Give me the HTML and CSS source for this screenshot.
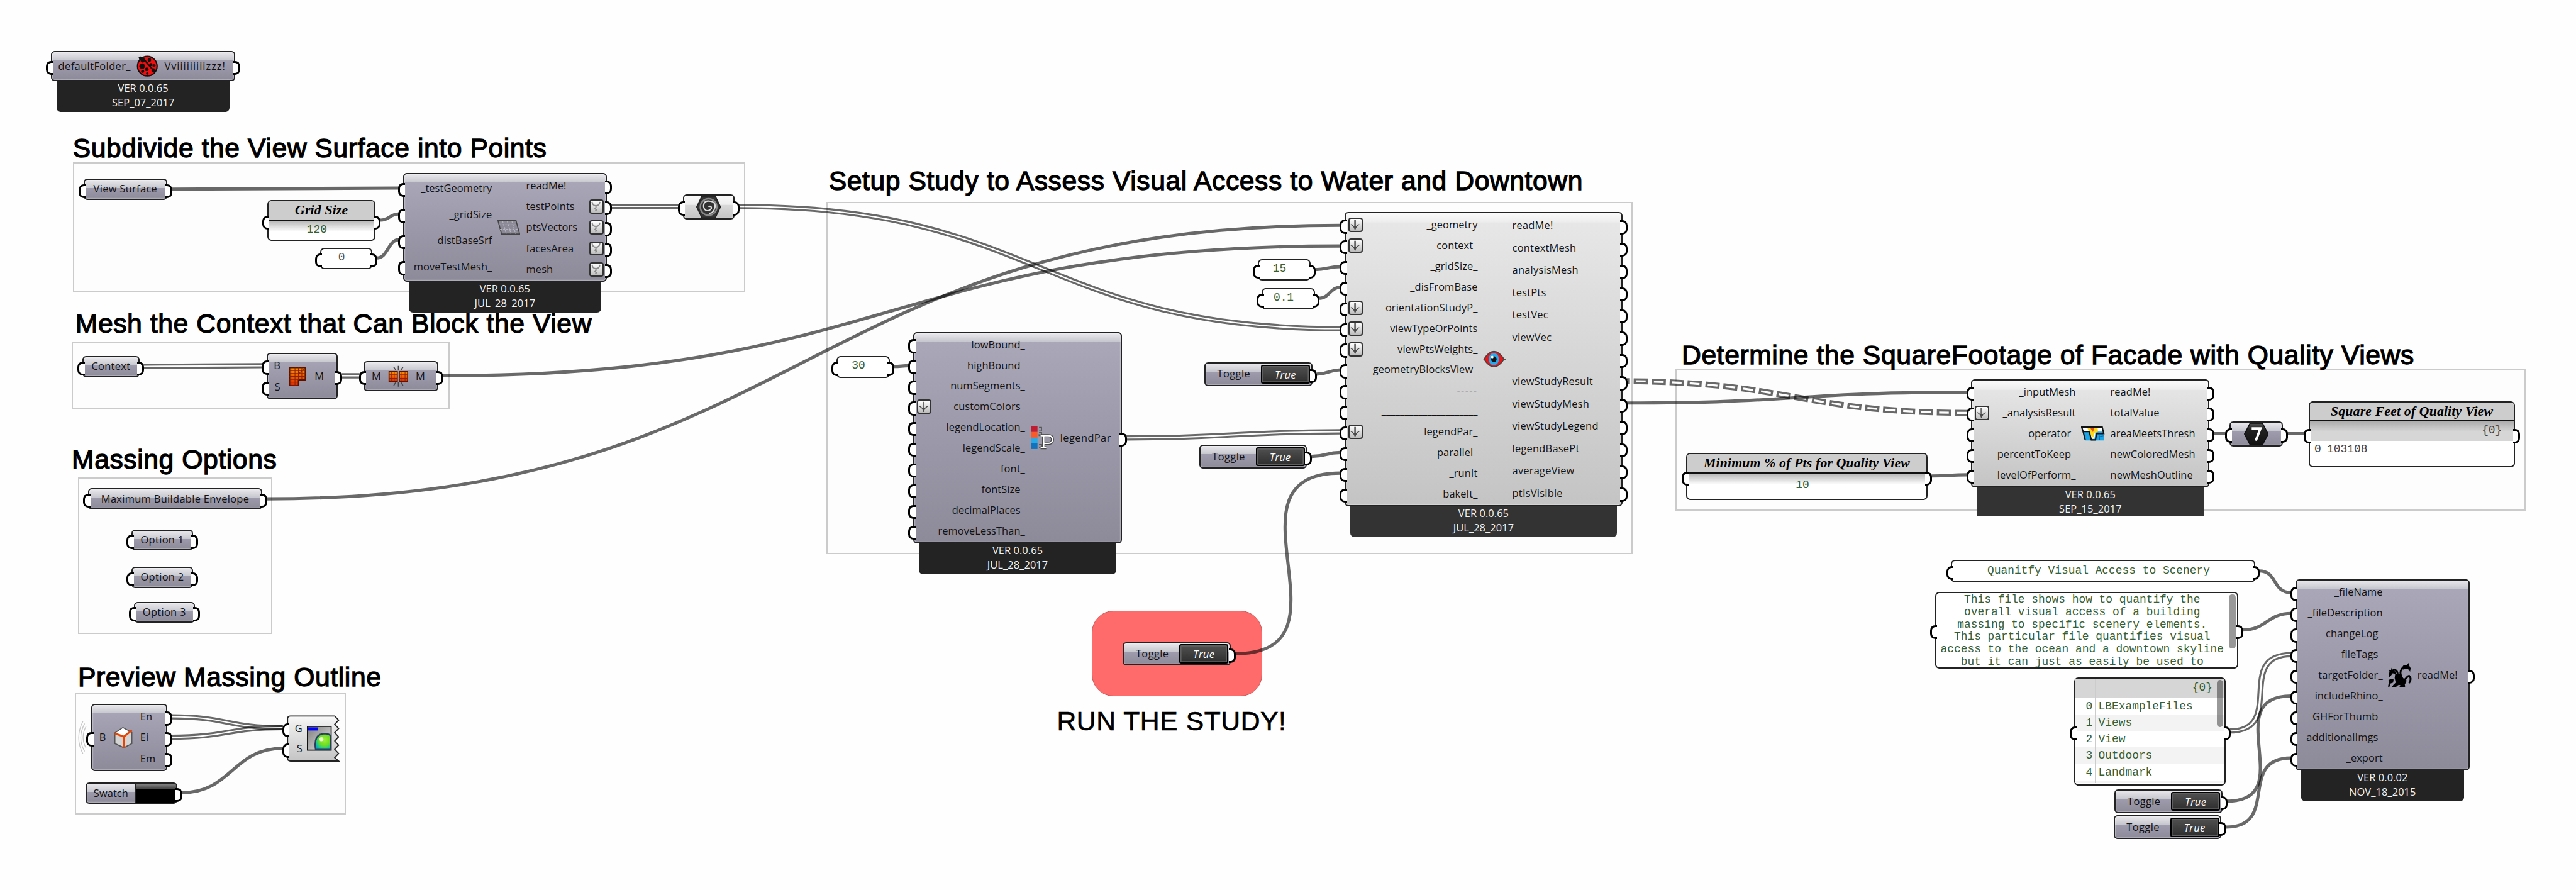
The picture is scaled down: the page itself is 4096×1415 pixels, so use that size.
FILE: index.html
```html
<!DOCTYPE html>
<html lang="en">
<head>
<meta charset="utf-8">
<title>View analysis definition</title>
<link rel="stylesheet" href="styles.css">
</head>
<body>
<svg class="defs" width="0" height="0" aria-hidden="true">
  <defs>
    <symbol id="arrow" viewBox="0 0 22 22"><path d="M11 1v14" stroke="#6a6a6a" stroke-width="3.600"/><path d="M2.500 10q6 2 8.500 11q2.500-9 8.500-11q-4 4-8.500 4t-8.500-4z" fill="#4a4a4a" stroke="#4a4a4a" stroke-width="1.500"/></symbol>
    <symbol id="graft" viewBox="0 0 22 22"><path d="M3 1q1 8 8 8t8-8M11 9v4l-2 2 3 2-2 3" fill="none" stroke="#8c8c8c" stroke-width="2.6"/></symbol>
    <linearGradient id="dark" x2="0" y2="1"><stop offset="0" stop-color="#555"/><stop offset=".3" stop-color="#222"/><stop offset="1" stop-color="#111"/></linearGradient>
    <linearGradient id="lava" x2="0" y2="1"><stop offset="0" stop-color="#ff9400"/><stop offset="1" stop-color="#e02800"/></linearGradient>
    <radialGradient id="ball" cx=".6" cy=".4" r=".7"><stop offset="0" stop-color="#9df03a"/><stop offset=".5" stop-color="#6fdd20"/><stop offset=".8" stop-color="#14c79a"/><stop offset="1" stop-color="#0aa0c0"/></radialGradient>
    <linearGradient id="silver" x2="1" y2="1"><stop offset="0" stop-color="#7d7d7d"/><stop offset="1" stop-color="#e8e8e8"/></linearGradient>
  </defs>
</svg>
<main class="canvas">
  <div class="group" id="g-subdivide"></div>
  <div class="group" id="g-mesh"></div>
  <div class="group" id="g-massing"></div>
  <div class="group" id="g-preview"></div>
  <div class="group" id="g-setup"></div>
  <div class="group" id="g-footage"></div>
  <div class="group run" id="g-run"></div>

  <svg class="wires" viewBox="0 0 4992 1724">
    <path d="M332 366.5C552 366.5 552 364.5 773 364.5"/>
    <path d="M737 426.5C755 426.5 755 414.7 773 414.7"/>
    <path d="M730 500C752 500 752 464.5 773 464.5"/>
    <path d="M858 728C1728 728 1728 476.7 2598 476.7"/>
    <path d="M516 966.6C1557 966.6 1557 436.7 2598 436.7"/>
    <path d="M352 1536C450 1536 450 1450 548 1450"/>
    <path d="M1732 710.3C1747 710.3 1747 708.6 1762 708.6"/>
    <path d="M2548 522.5C2573 522.5 2573 516.7 2598 516.7"/>
    <path d="M2556 578C2577 578 2577 556.7 2598 556.7"/>
    <path d="M2552 725C2575 725 2575 716.7 2598 716.7"/>
    <path d="M2542 884.4C2570 884.4 2570 876.7 2598 876.7"/>
    <path d="M2394 1266.7C2639 1266.7 2353 916.7 2598 916.7"/>
    <path d="M3743 922.3C3778 922.3 3778 920 3812 920"/>
    <path d="M4290 840.3H4313M4432 840.3H4466"/>
    <path d="M4378 1106.3C4414 1106.3 4403 1148.4 4440 1148.4"/>
    <path d="M4346 1220.7C4393 1220.7 4393 1188.5 4440 1188.5"/>
    <path d="M4316 1552.5C4459 1552.5 4297 1348.5 4440 1348.5"/>
    <path d="M4314 1602.7C4419 1602.7 4335 1468.7 4440 1468.7"/>
    <g class="pair">
      <path d="M1184 397H1315M1184 403H1315"/>
      <path d="M1432 397C2016 397 2016 633.7 2598 633.7"/><path d="M1432 403.3C2014 403.3 2014 640 2598 640"/>
      <path d="M278 706.8C393 706.8 393 705.4 509 705.4"/><path d="M278 713.2C393 713.2 393 711.8 509 711.8"/>
      <path d="M662 725H697M662 731.4H697"/>
      <path d="M332 1385.7C440 1385.7 440 1407 548 1407"/><path d="M332 1391.9C440 1391.9 440 1413.2 548 1413.2"/>
      <path d="M332 1425.3C440 1425.3 440 1407 548 1407"/><path d="M332 1431.5C440 1431.5 440 1413.2 548 1413.2"/>
      <path d="M2182 845.3C2390 845.3 2390 833.5 2598 833.5"/><path d="M2182 851.7C2390 851.7 2390 839.9 2598 839.9"/>
      <path d="M4321 1413.3C4427 1413.3 4324 1265.4 4440 1265.4"/><path d="M4321 1419.5C4436 1419.5 4334 1271.6 4440 1271.6"/>
    </g>
    <path class="chain" d="M3131 738.5C3479 738.5 3479 800 3820 800"/>
    <path class="chain hollow" d="M3131 738.5C3479 738.5 3479 800 3820 800"/>
    <path d="M3152 781C3482 781 3482 760 3812 760"/>
    <g class="waves"><path d="M167 1407q-12 22 0 43"/><path d="M164 1402q-15 28 0 54"/><path d="M161 1397q-17 33 0 64"/></g>
  </svg>

  <h2 id="t-subdivide">Subdivide the View Surface into Points</h2>
  <h2 id="t-mesh">Mesh the Context that Can Block the View</h2>
  <h2 id="t-massing">Massing Options</h2>
  <h2 id="t-preview">Preview Massing Outline</h2>
  <h2 id="t-setup">Setup Study to Assess Visual Access to Water and Downtown</h2>
  <h2 id="t-footage">Determine the SquareFootage of Facade with Quality Views</h2>
  <h2 class="plain" id="t-run">RUN THE STUDY!</h2>

  <article class="node" id="ladybug">
    <div class="body">
      <ul class="ins"><li>defaultFolder_</li></ul>
      <svg class="icon" viewBox="0 0 42 42"><path d="M6 11L4 3l4-1 6 4 6-3z" fill="#111"/><circle cx="21" cy="21" r="19" fill="#f50d0d" stroke="#111" stroke-width="2.5"/><path d="M13 6L36 33" stroke="#111" stroke-width="3"/><g fill="#111"><circle cx="11" cy="21" r="5.4"/><circle cx="12" cy="10" r="4"/><circle cx="25" cy="9" r="3.4"/><circle cx="28" cy="18" r="3"/><circle cx="34" cy="20" r="3"/><circle cx="20" cy="27" r="3.5"/><circle cx="12" cy="31" r="3"/><circle cx="21" cy="35" r="2.4"/><circle cx="33" cy="29" r="4"/></g></svg>
      <ul class="outs"><li>Vviiiiiiiiizzz!</li></ul>
    </div>
    <footer>VER 0.0.65<br>SEP_07_2017</footer>
  </article>

  <div class="param grips" id="view-surface">View Surface</div>
  <div class="panel grips" id="grid-size"><h3>Grid Size</h3><p>120</p></div>
  <div class="panel grips small" id="p-zero"><p>0</p></div>

  <article class="node" id="testgeo">
    <div class="body">
      <ul class="ins"><li>_testGeometry</li><li>_gridSize</li><li>_distBaseSrf</li><li>moveTestMesh_</li></ul>
      <svg class="icon" viewBox="0 0 44 28"><path d="M1 1h35l7 26H8z" fill="#8b8a96" stroke="#444" stroke-width="2"/><path d="M3 9h35M5 18h36M10 2l7 24M19 2l7 24M28 2l7 24" stroke="#b5b4c0" stroke-width="1.6" stroke-dasharray="4 2"/></svg>
      <ul class="outs"><li>readMe!</li><li>testPoints<i class="btn"><svg><use href="#graft"/></svg></i></li><li>ptsVectors<i class="btn"><svg><use href="#graft"/></svg></i></li><li>facesArea<i class="btn"><svg><use href="#graft"/></svg></i></li><li>mesh<i class="btn"><svg><use href="#graft"/></svg></i></li></ul>
    </div>
    <footer>VER 0.0.65<br>JUL_28_2017</footer>
  </article>

  <div class="param grips light" id="relay"><svg viewBox="0 0 48 44"><path d="M11 1h26l10 21-10 21H11L1 22z" fill="#333" stroke="#222" stroke-width="2"/><circle cx="24" cy="22" r="16" fill="none" stroke="#888" stroke-width="3"/><path d="M24 22q3-3 5 0t-3 6-9-1-2-11 13-5 8 13-11 10" fill="none" stroke="#ddd" stroke-width="2.6"/></svg></div>

  <div class="param grips" id="context">Context</div>
  <article class="node" id="brep-mesh">
    <div class="body">
      <ul class="ins"><li>B</li><li>S</li></ul>
      <svg class="icon" viewBox="0 0 36 40"><path d="M2 2h32v25H20v12H2z" fill="url(#lava)" stroke="#5a1200" stroke-width="2.5"/><path d="M20 2v25M7 2v36M13 2v36M27 2v24M2 8h32M2 14h32M2 20h32M2 26h18M2 32h18M21 14l12-11" stroke="#8a2200" stroke-width="1.4"/></svg>
      <ul class="outs"><li>M</li></ul>
    </div>
  </article>
  <article class="node" id="mesh-join">
    <div class="body">
      <ul class="ins"><li>M</li></ul>
      <svg class="icon" viewBox="0 0 40 42"><g fill="url(#lava)" stroke="#5a1200" stroke-width="2"><path d="M2 12h16v19H2zM22 12h16v19H22z"/></g><path d="M7 12v19M12 12v19M2 18h16M2 25h16M27 12v19M33 12v19M22 18h16M22 25h16" stroke="#8a2200" stroke-width="1.2"/><path d="M20 1v8M11 3l4 6M29 3l-4 6M20 33v8M11 39l4-6M29 39l-4-6" stroke="#444" stroke-width="2"/></svg>
      <ul class="outs"><li>M</li></ul>
    </div>
  </article>

  <div class="param grips" id="envelope">Maximum Buildable Envelope</div>
  <div class="param grips" id="option1">Option 1</div>
  <div class="param grips" id="option2">Option 2</div>
  <div class="param grips" id="option3">Option 3</div>

  <article class="node" id="edges">
    <div class="body">
      <ul class="ins"><li>B</li></ul>
      <svg class="icon" viewBox="0 0 36 40"><path d="M17 1l17 9v21l-15 8L2 31V11z" fill="#d4d4d4" stroke="#555" stroke-width="2"/><path d="M17 2l15 8-13 7L4 11z" fill="#fff"/><path d="M2 12l17 6v21M19 18L34 6" fill="none" stroke="#e84300" stroke-width="3.6"/></svg>
      <ul class="outs"><li>En</li><li>Ei</li><li>Em</li></ul>
    </div>
  </article>
  <div class="swatch"><span>Swatch</span><b></b></div>
  <article class="jagged">
    <svg class="edge" viewBox="0 0 101 89"><defs><linearGradient id="lt" x2="0" y2="1"><stop offset="0" stop-color="#fafafa"/><stop offset=".18" stop-color="#ececec"/><stop offset="1" stop-color="#c4c4c4"/></linearGradient></defs><path d="M7 1.500H92l7.500 8-7.500 8 7.500 8-7.500 8 7.500 8-7.500 8 7.500 8-7.500 8 7.500 8-7.500 8 7.500 6.500H7q-5.500 0-5.500-5.500V7q0-5.500 5.500-5.500z" fill="url(#lt)" stroke="#222" stroke-width="2.2"/></svg>
    <ul class="ins"><li>G</li><li>S</li></ul>
    <svg class="scene" viewBox="0 0 48 48"><path d="M1 1h46v46H1z" fill="url(#silver)" stroke="#111" stroke-width="2"/><path d="M2 3h19v6H2z" fill="#00f"/><path d="M17 46Q12 16 34 15q8 0 12 4v27z" fill="url(#ball)" stroke="#2a3f5c" stroke-width="3"/><circle cx="28" cy="26" r="4" fill="#fff" opacity=".8"/></svg>
  </article>

  <div class="panel grips small" id="p-thirty"><p>30</p></div>
  <article class="node" id="legend">
    <div class="body">
      <ul class="ins"><li>lowBound_</li><li>highBound_</li><li>numSegments_</li><li><i class="btn"><svg><use href="#arrow"/></svg></i>customColors_</li><li>legendLocation_</li><li>legendScale_</li><li>font_</li><li>fontSize_</li><li>decimalPlaces_</li><li>removeLessThan_</li></ul>
      <svg class="icon" viewBox="0 0 46 46"><path d="M1 1h12v11H1z" fill="#c01d33"/><path d="M1 12h12v11H1z" fill="#fa5a28"/><path d="M1 23h12v11H1z" fill="#29a9e5"/><path d="M1 34h12v11H1z" fill="#1172bd"/><path d="M16 3h5v7h-5M16 13h5v6h-5v-3M16 36h5v6h-5" fill="none" stroke="#555" stroke-width="1.600"/><path d="M25 42V19h9q8 0 8 7.500t-8 7.500h-8M19 19h7M19 42.500h11" fill="none" stroke="#444" stroke-width="6"/><path d="M25 42V19h9q8 0 8 7.500t-8 7.500h-8M19 19h7M19 42.500h11" fill="none" stroke="#fff" stroke-width="2.800"/></svg>
      <ul class="outs"><li>legendPar</li></ul>
    </div>
    <footer>VER 0.0.65<br>JUL_28_2017</footer>
  </article>

  <div class="panel grips small" id="p-fifteen"><p>15</p></div>
  <div class="panel grips small" id="p-tenth"><p>0.1</p></div>
  <div class="toggle" id="toggle1"><span>Toggle</span><b>True</b></div>
  <div class="toggle" id="toggle2"><span>Toggle</span><b>True</b></div>
  <div class="toggle" id="toggle3"><span>Toggle</span><b>True</b></div>

  <article class="node light" id="view-study">
    <div class="body">
      <ul class="ins"><li><i class="btn"><svg><use href="#arrow"/></svg></i>_geometry</li><li><i class="btn"><svg><use href="#arrow"/></svg></i>context_</li><li>_gridSize_</li><li>_disFromBase</li><li><i class="btn"><svg><use href="#arrow"/></svg></i>orientationStudyP_</li><li><i class="btn"><svg><use href="#arrow"/></svg></i>_viewTypeOrPoints</li><li><i class="btn"><svg><use href="#arrow"/></svg></i>viewPtsWeights_</li><li>geometryBlocksView_</li><li class="dashes">-----</li><li>_____________________</li><li><i class="btn"><svg><use href="#arrow"/></svg></i>legendPar_</li><li>parallel_</li><li>_runIt</li><li>bakeIt_</li></ul>
      <svg class="icon" viewBox="0 0 46 34"><path d="M1 17h44" stroke="#555" stroke-width="2.500"/><path d="M2 17Q21-13 41 17Q21 47 2 17z" fill="#f01414" stroke="#444" stroke-width="2"/><ellipse cx="21" cy="17" rx="10" ry="12" fill="#20aaf0"/><circle cx="21" cy="17" r="5.500" fill="#111"/><circle cx="18" cy="13" r="2.500" fill="#fff"/></svg>
      <ul class="outs"><li>readMe!</li><li>contextMesh</li><li>analysisMesh</li><li>testPts</li><li>testVec</li><li>viewVec</li><li>_____________________</li><li>viewStudyResult</li><li>viewStudyMesh</li><li>viewStudyLegend</li><li>legendBasePt</li><li>averageView</li><li>ptIsVisible</li></ul>
    </div>
    <footer>VER 0.0.65<br>JUL_28_2017</footer>
  </article>

  <div class="panel grips" id="min-pts"><h3>Minimum % of Pts for Quality View</h3><p>10</p></div>
  <article class="node light" id="area">
    <div class="body">
      <ul class="ins"><li>_inputMesh</li><li><i class="btn"><svg><use href="#arrow"/></svg></i>_analysisResult</li><li>_operator_</li><li>percentToKeep_</li><li>levelOfPerform_</li></ul>
      <svg class="icon" viewBox="0 0 46 28"><path d="M1 1h40l4 26H8z" fill="#1ba5e6"/><path d="M3 3h37l2 7H28l-2 14h-6L17 10H4z" fill="#fff"/><path d="M12 3h20l1 7-7 3-2 8h-3l-4-10z" fill="#ffd81a"/><path d="M18 3h8l-3 8z" fill="#e8501a"/><path d="M41 1H1l3 9h12l4 16h8l2-12h14L41 1zM8 26L4 10" fill="none" stroke="#111" stroke-width="2.600"/><path d="M34 20l10-2M36 26l-1-11" stroke="#0b6fb0" stroke-width="1.500"/></svg>
      <ul class="outs"><li>readMe!</li><li>totalValue</li><li>areaMeetsThresh</li><li>newColoredMesh</li><li>newMeshOutline</li></ul>
    </div>
    <footer>VER 0.0.65<br>SEP_15_2017</footer>
  </article>
  <div class="param grips" id="integer"><svg viewBox="0 0 48 44"><path d="M12 1h24l11 21-11 21H12L1 22z" fill="url(#dark)" stroke="#111" stroke-width="2"/><path d="M15 11h17l-9 24" fill="none" stroke="#fff" stroke-width="4.600"/></svg></div>
  <div class="panel grips list" id="sq-feet"><h3>Square Feet of Quality View</h3><div class="path"><span></span><span>{0}</span></div><div class="row"><span>0</span><span>103108</span></div></div>

  <div class="panel grips" id="file-name"><p>Quanitfy Visual Access to Scenery</p></div>
  <div class="panel grips" id="file-desc"><p>This file shows how to quantify the<br>overall visual access of a building<br>massing to specific scenery elements.<br>This particular file quantifies visual<br>access to the ocean and a downtown skyline<br>but it can just as easily be used to</p><i class="scroll"></i></div>
  <div class="panel grips list" id="tags"><div class="path"><span></span><span>{0}</span></div><div class="row"><span>0</span><span>LBExampleFiles</span></div><div class="row"><span>1</span><span>Views</span></div><div class="row"><span>2</span><span>View</span></div><div class="row"><span>3</span><span>Outdoors</span></div><div class="row"><span>4</span><span>Landmark</span></div><div class="row"><span></span><span></span></div><i class="scroll"></i></div>
  <div class="toggle" id="toggle4"><span>Toggle</span><b>True</b></div>
  <div class="toggle" id="toggle5"><span>Toggle</span><b>True</b></div>
  <article class="node" id="export">
    <div class="body">
      <ul class="ins"><li>_fileName</li><li>_fileDescription</li><li>changeLog_</li><li>fileTags_</li><li>targetFolder_</li><li>includeRhino_</li><li>GHForThumb_</li><li>additionalImgs_</li><li>_export</li></ul>
      <svg class="icon" viewBox="0 0 46 48"><g fill="#000"><path d="M14 22q8-3 12 2l4 6q8 0 5 8l-3 4 1 5H22l2-4-6-1-2 5H9l1-4 5-5-2-9z"/><path d="M1 26l2-9-1-4 4 1 1-5 2 6 8 2-2 4-6-1-5 7z"/><path d="M27 9l3-4 7-1 3-4 1 5 3 5-1 7-4-5-5-1-5 2z"/><path d="M0 46l2-9-1-4 5-2 5 1-1 6-5 2-2 6z"/></g><g fill="none" stroke="#000" stroke-width="3.600"><path d="M8 15q10-5 11 8M26 26q-4-8 1-15l6-5M32 34q5-8 9-9 6 5 0 14M20 41l-12 6M30 40l2 6"/></g></svg>
      <ul class="outs"><li>readMe!</li></ul>
    </div>
    <footer>VER 0.0.02<br>NOV_18_2015</footer>
  </article>
</main>
</body>
</html>
```

FILE: styles.css
```css
* { box-sizing: border-box; margin: 0; padding: 0; }
body { background: #fefefe; overflow: hidden; }
ul { list-style: none; }
.defs { position: absolute; }

.canvas {
  position: relative;
  width: 4992px;
  height: 1724px;
  overflow: hidden;
  zoom: 0.8205128;
  font: 20px/28px "Open Sans", "Noto Sans", sans-serif;
  letter-spacing: 0.1px;
  color: #111;
}
.canvas > * { position: absolute; white-space: nowrap; }

/* Group frames */
.group { border: 3px solid #cbcbcb; background: #fdfdfd; }
.group.run { border: 2px solid #c85a5a; border-radius: 42px; background: #ff6a6a; }
#g-subdivide { left: 141px; top: 315px; width: 1303px; height: 251px; }
#g-mesh { left: 139px; top: 663px; width: 732px; height: 131px; }
#g-massing { left: 151px; top: 925px; width: 377px; height: 303px; }
#g-preview { left: 145px; top: 1343px; width: 525px; height: 235px; }
#g-setup { left: 1601px; top: 391px; width: 1563px; height: 683px; }
#g-footage { left: 3247px; top: 715px; width: 1647px; height: 275px; }
#g-run { left: 2116px; top: 1184px; width: 330px; height: 165px; }

/* Wires */
.wires { left: 0; top: 0; width: 4992px; height: 1724px; }
.wires path { fill: none; stroke: #000; stroke-opacity: 0.59; stroke-width: 6.2; }
.wires .pair path { stroke-width: 3.8; }
.wires .chain { stroke-width: 11.5; stroke-dasharray: 27.500 7.3; }
.wires .hollow { stroke: #fdfdfd; stroke-opacity: 1; stroke-width: 4; stroke-dasharray: 19 15.8; stroke-dashoffset: -4.3; }
.wires .waves path { stroke-width: 1.6; stroke-opacity: 0.22; }

/* Headings */
h2 {
  font: 52px/60px "Liberation Sans", Arial, sans-serif;
  color: #000;
  -webkit-text-stroke: 1.6px #000;
  letter-spacing: 0.7px;
}
h2.plain { -webkit-text-stroke-width: 0.8px; }
#t-subdivide { left: 141px; top: 257px; }
#t-mesh { left: 146px; top: 597px; }
#t-massing { left: 139px; top: 861px; }
#t-preview { left: 151px; top: 1282px; }
#t-setup { left: 1606px; top: 320px; }
#t-footage { left: 3259px; top: 658px; }
#t-run { left: 2048px; top: 1367px; }

/* Shared capsule look */
.body, .param, .toggle, .swatch {
  border: 2.5px solid #222;
  border-radius: 7px;
  background:
    linear-gradient(#e8e8ec, #c6c6ce) top / 100% 16px no-repeat,
    linear-gradient(#aaa8b9, #8d8b9a);
  box-shadow: inset 0 0 0 1.5px rgba(255, 255, 255, 0.28);
}
.light .body, .param.light {
  background:
    linear-gradient(#fafafa, #ececec) top / 100% 18px no-repeat,
    linear-gradient(#e8e8e8, #c4c4c4);
}

/* Grips */
.ins li, .outs li { position: relative; }
.ins li::before, .outs li::after, .grips::before, .grips::after, .toggle::after, .swatch::after {
  content: "";
  position: absolute;
  top: calc(50% - 10px);
  width: 10px;
  height: 20px;
  border: 4px solid #000;
  background: #fff;
}
.ins li::before, .grips::before {
  left: -12px;
  border-right: 0;
  border-radius: 10px 0 0 10px;
}
.outs li::after, .grips::after, .toggle::after, .swatch::after {
  right: -12px;
  border-left: 0;
  border-radius: 0 10px 10px 0;
}

/* Components */
.body { display: grid; align-items: center; padding: 2px 0; }
.ins, .outs { display: flex; flex-direction: column; height: 100%; }
.ins li, .outs li { flex: 1; display: flex; align-items: center; padding-top: 1px; }
.ins li { justify-content: flex-end; }
.ins .dashes { letter-spacing: 1.6px; }
.icon { justify-self: center; }
.node footer {
  height: 60px;
  margin: 0 11px;
  border-radius: 0 0 8px 8px;
  background: #232323;
  color: #f4f4f4;
  text-align: center;
  line-height: 28px;
}
.light footer { background: #333; }
.btn {
  width: 28px;
  height: 28px;
  padding: 1px;
  border: 2.5px solid #333;
  border-radius: 5px;
  background: linear-gradient(#fff, #bdbdbd);
}
.btn svg { display: block; width: 21px; height: 21px; }
.ins .btn { margin: 0 auto 0 4px; }
.outs .btn { margin: 0 4px 0 auto; }

#ladybug { left: 99px; top: 99px; width: 357px; }
#ladybug .body { height: 58px; grid-template-columns: 152px 1fr 135px; }
#ladybug .ins { letter-spacing: 0.5px; }
#ladybug .outs { letter-spacing: 1.2px; }
#ladybug .icon { width: 42px; }
#testgeo { left: 781px; top: 335px; width: 395px; }
#testgeo .body { height: 211px; grid-template-columns: 170px 1fr 154px; }
#testgeo .icon { width: 44px; }
#brep-mesh { left: 517px; top: 684px; width: 137px; }
#brep-mesh .body { height: 90px; grid-template-columns: 24px 1fr 42px; }
#brep-mesh .icon { width: 34px; }
#mesh-join { left: 705px; top: 700px; width: 145px; }
#mesh-join .body { height: 58px; grid-template-columns: 31px 1fr 42px; }
#mesh-join .icon { width: 40px; }
#edges { left: 177px; top: 1364px; width: 147px; }
#edges .body { height: 130px; grid-template-columns: 26px 1fr 50px; }
#edges .icon { width: 37px; }
#legend { left: 1770px; top: 643px; width: 404px; }
#legend .body { height: 410px; grid-template-columns: 214px 1fr 117px; }
#legend .outs { letter-spacing: 0.5px; }
#legend .icon { width: 46px; }
#view-study { left: 2606px; top: 411px; width: 538px; }
#view-study .body { height: 570px; grid-template-columns: 255px 1fr 211px; }
#view-study .outs { letter-spacing: 0.3px; }
#view-study .icon { width: 46px; }
#area { left: 3820px; top: 735px; width: 462px; }
#area .body { height: 210px; grid-template-columns: 200px 1fr 190px; }
#area .icon { width: 46px; }
#area footer { height: 55px; border-radius: 0; }
#export { left: 4448px; top: 1123px; width: 338px; }
#export .body { height: 370px; grid-template-columns: 167px 1fr 99px; }
#export .icon { width: 46px; }

/* Single-parameter capsules */
.param { display: flex; align-items: center; justify-content: center; height: 41px; letter-spacing: 0.4px; }
.param svg { width: 48px; }
#view-surface { left: 162px; top: 346px; width: 162px; }
#relay { left: 1323px; top: 376px; width: 101px; height: 49px; }
#context { left: 160px; top: 690px; width: 110px; }
#envelope { left: 171px; top: 946px; width: 337px; }
#option1 { left: 255px; top: 1026px; width: 119px; }
#option2 { left: 255px; top: 1098px; width: 119px; }
#option3 { left: 259px; top: 1166px; width: 119px; }
#integer { left: 4321px; top: 816px; width: 103px; height: 49px; }

/* Toggles and the colour swatch */
.toggle { display: flex; width: 209px; height: 46px; padding: 2px; letter-spacing: 0.5px; }
.toggle span, .swatch span { flex: 1; display: flex; align-items: center; justify-content: center; }
.toggle b {
  width: 95px;
  border: 2.5px solid #000;
  border-radius: 4px;
  background: linear-gradient(#505050, #2e2e2e);
  box-shadow: inset 0 0 0 2px #606060;
  color: #fff;
  font-weight: 400;
  font-style: italic;
  line-height: 34px;
  text-align: center;
}
#toggle1 { left: 2334px; top: 702px; }
#toggle2 { left: 2324px; top: 862px; }
#toggle3 { left: 2176px; top: 1244px; }
#toggle4 { left: 4098px; top: 1530px; }
#toggle5 { left: 4096px; top: 1580px; }
.swatch { display: flex; left: 166px; top: 1516px; width: 178px; height: 42px; }
.swatch b {
  width: 80px;
  border-left: 2px solid #222;
  border-radius: 0 4px 4px 0;
  background: linear-gradient(#888, #444) top / 100% 10px no-repeat, #000;
}

/* Preview component with a torn right side */
.jagged { left: 556px; top: 1386px; width: 102px; height: 90px; display: flex; padding: 5px 0; align-items: center; }
.jagged .edge { position: absolute; left: 0; top: 0; width: 102px; height: 90px; }
.jagged .ins { width: 30px; margin-right: 9px; }
.jagged .ins li::before { left: -9px; }
.jagged .scene { position: relative; width: 48px; }

/* Text panels */
.panel {
  border: 2.5px solid #222;
  border-radius: 8px;
  background: #fff;
  font: 21.8px/24.1px "Liberation Mono", "Courier New", monospace;
  letter-spacing: 0;
  color: #356035;
}
.panel h3 {
  border-bottom: 3px solid #111;
  border-radius: 5px 5px 0 0;
  background: #cdcdcd;
  font: italic bold 26.500px/35px "Liberation Serif", "Times New Roman", serif;
  letter-spacing: 0.2px;
  color: #000;
  text-align: center;
}
.panel p { text-align: center; }
.small { height: 42px; line-height: 34px; }
.small p { padding-right: 18px; }
#grid-size { left: 518px; top: 388px; width: 210px; height: 79px; background: linear-gradient(#bbb, #fff) 0 38px / 100% 20px no-repeat, #fff; }
#grid-size p { padding: 6px 18px 0 0; }
#p-zero { left: 620px; top: 480px; width: 102px; color: #555; }
#p-thirty { left: 1621px; top: 690px; width: 103px; }
#p-fifteen { left: 2437px; top: 502px; width: 103px; }
#p-tenth { left: 2445px; top: 558px; width: 103px; }
#min-pts { left: 3268px; top: 878px; width: 467px; height: 91px; background: linear-gradient(#bbb, #fff) 0 38px / 100% 20px no-repeat, #fff; }
#min-pts p { padding: 11px 17px 0 0; }
.list .path, .list .row { display: flex; height: 32px; line-height: 32px; }
.list .path { height: 37px; background: #d6d6d6; line-height: 35px; }
.list span:first-child { border-right: 2px solid #ccc; text-align: right; }
.list span:last-child { flex: 1; padding-left: 5px; }
.list .path span:last-child { text-align: right; }
#sq-feet { left: 4474px; top: 777px; width: 400px; height: 129px; color: #444; }
#sq-feet .path { background: linear-gradient(#adadad, #d6d6d6 20px); }
#sq-feet .row { height: 49px; }
#sq-feet span:first-child { width: 28px; padding-right: 5px; }
#sq-feet .path span:last-child { padding-right: 23px; }
#file-name { left: 3781px; top: 1085px; width: 589px; height: 43px; line-height: 37px; }
#file-name p { padding-right: 17px; }
#file-desc { left: 3750px; top: 1147px; width: 588px; height: 149px; }
#file-desc p { padding: 1px 18px 0 0; }
#tags { left: 4020px; top: 1313px; width: 293px; height: 209px; }
#tags span:first-child { width: 39px; padding-right: 5px; }
#tags .path span:last-child { padding-right: 23px; }
#tags .row:nth-child(odd) { background: #f3f3f3; }
#tags .row:nth-child(7) { height: 5px; }
.scroll { position: absolute; width: 13px; border-radius: 6px; background: rgba(0, 0, 0, 0.4); }
#file-desc .scroll { right: 3px; top: 2px; height: 105px; }
#tags .scroll { right: 2px; top: 2px; height: 91px; }
```
